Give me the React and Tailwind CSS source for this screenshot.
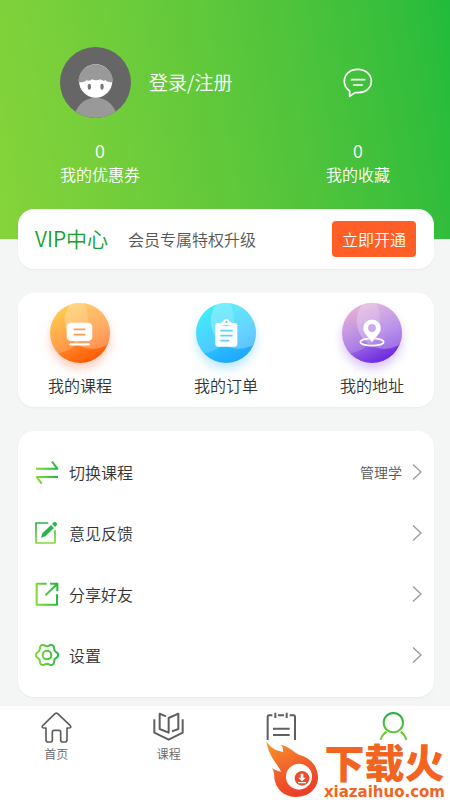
const shortcuts = [
  { label: "我的课程", Icon: CourseBall, glow: "shadow-[0_6px_10px_#ff6a3c50]" },
  { label: "我的订单", Icon: OrderBall, glow: "shadow-[0_6px_10px_#35b8ff50]" },
  { label: "我的地址", Icon: AddressBall, glow: "shadow-[0_6px_10px_#8a4cf050]" },
];

const menu = [
  { label: "切换课程", value: "管理学", Icon: SwapIcon },
  { label: "意见反馈", Icon: FeedbackIcon },
  { label: "分享好友", Icon: ShareIcon },
  { label: "设置", Icon: GearIcon },
];

const tabs = [
  { name: "首页", Icon: HomeIcon, showLabel: true },
  { name: "课程", Icon: BookIcon, showLabel: true },
  { name: "题库", Icon: CalendarIcon },
  { name: "我的", Icon: UserIcon },
];

function Avatar() {
  return (
    <svg viewBox="0 0 213 213" className="size-[71px]" aria-hidden="true">
      <defs>
        <clipPath id="avatar-clip">
          <circle cx="106.5" cy="106.5" r="106.5" />
        </clipPath>
      </defs>
      <g clipPath="url(#avatar-clip)">
        <rect width="213" height="213" fill="#666" />
        <circle cx="107" cy="216" r="64" fill="#999" />
        <circle cx="107" cy="102" r="50" fill="#fff" />
        <path d="M55 105a52 53 0 0 1 104 0q-14 3-23-5q-10 3-14-3q-14 6-26 0q-5 6-16 3q-8 8-25 5z" fill="#999" />
        <ellipse cx="88" cy="119" rx="5" ry="9" fill="#777" />
        <ellipse cx="126" cy="119" rx="5" ry="9" fill="#777" />
      </g>
    </svg>
  );
}

function ChatIcon() {
  return (
    <svg viewBox="0 0 90 90" className="size-[30px]" fill="none" stroke="#fff" strokeWidth="5" strokeLinecap="round" strokeLinejoin="round" aria-hidden="true">
      <path d="M20 85V69C9 62 4 52 4 40C4 18 21 4 44 4S85 19 85 40S67 74 46 74H36z" />
      <path d="M25 35H65M32 51H58" />
    </svg>
  );
}

function Ball({ id, from, mid, to, children }) {
  return (
    <svg viewBox="0 0 180 180" className="size-[60px]" aria-hidden="true">
      <defs>
        <linearGradient id={id} x1="0.2" y1="0.1" x2="0.65" y2="1">
          <stop offset="0" stopColor={from} />
          <stop offset="0.55" stopColor={mid} />
          <stop offset="1" stopColor={to} />
        </linearGradient>
        <clipPath id={`${id}-clip`}>
          <circle cx="90" cy="90" r="90" />
        </clipPath>
      </defs>
      <g clipPath={`url(#${id}-clip)`}>
        <rect width="180" height="180" fill={`url(#${id})`} />
        <circle cx="128" cy="54" r="84" fill="#fff" opacity="0.28" />
        <circle cx="10" cy="48" r="104" fill="#fff" opacity="0.16" />
      </g>
      {children}
    </svg>
  );
}

function CourseBall() {
  return (
    <Ball id="ball-course" from="#ffc02e" mid="#ff8a2a" to="#ff5a00">
      <rect x="50" y="59" width="77" height="55" rx="13" fill="#fff" />
      <path d="M73 79h31M73 95h31" stroke="#ff9b55" strokeWidth="5" strokeLinecap="round" />
      <path d="M62 124h54" stroke="#fff" strokeWidth="7" strokeLinecap="round" />
    </Ball>
  );
}

function OrderBall() {
  return (
    <Ball id="ball-order" from="#1de8fa" mid="#2cc4ff" to="#1fa4ff">
      <path d="M65 60h11q0 10 15 10t15-10h11q7 0 7 7v57q0 7-7 7H65q-7 0-7-7V67q0-7 7-7z" fill="#fff" />
      <path d="M74 62q0-5 7-6q2-8 10-8t10 8q7 1 7 6q0 4-5 4H79q-5 0-5-4z" fill="#fff" />
      <circle cx="91" cy="57" r="3" fill="#4fc9fd" />
      <path d="M75 83h33M75 98h33M75 113h23" stroke="#65cffb" strokeWidth="5" strokeLinecap="round" />
    </Ball>
  );
}

function AddressBall() {
  return (
    <Ball id="ball-address" from="#dca0cf" mid="#a06be2" to="#6a25e0">
      <ellipse cx="90" cy="117" rx="35" ry="11" fill="none" stroke="#fff" strokeWidth="5" />
      <path
        d="M90 49C74 49 63 61 63 76C63 92 79 102 86 114Q90 121 94 114C101 102 117 92 117 76C117 61 106 49 90 49zM90 64a11 11 0 1 1 0 22a11 11 0 1 1 0-22z"
        fill="#fff"
        stroke="#a981e6"
        strokeWidth="1"
        fillRule="evenodd"
      />
    </Ball>
  );
}

function LineIcon({ id, flip, children }) {
  return (
    <svg viewBox="0 0 72 72" className="size-6 shrink-0" fill="none" stroke={`url(#${id})`} strokeWidth="6" strokeLinejoin="round" aria-hidden="true">
      <defs>
        <linearGradient id={id} gradientUnits="userSpaceOnUse" x1={flip ? 30 : 4} y1={flip ? 4 : 40} x2={flip ? 36 : 68} y2={flip ? 70 : 34}>
          <stop offset="0" stopColor={flip ? "#27b24a" : "#84d83a"} />
          <stop offset="1" stopColor={flip ? "#8bdc38" : "#20b93f"} />
        </linearGradient>
      </defs>
      {children}
    </svg>
  );
}

function SwapIcon() {
  return (
    <LineIcon id="line-swap">
      <path d="M3 26H67L51 5M69 51H5L20 71" />
    </LineIcon>
  );
}

function FeedbackIcon() {
  return (
    <LineIcon id="line-feedback" flip>
      <path d="M40 6H3V66H60V28" strokeWidth="5" />
      <path d="M18 50L22 37L48 12L57 21L31 46z" fill="#2fb34b" stroke="none" />
      <path d="M51 9L55 5Q59 0 64 5Q69 10 64 14L60 18z" fill="#2fb34b" stroke="none" />
    </LineIcon>
  );
}

function ShareIcon() {
  return (
    <LineIcon id="line-share">
      <path d="M35 5H5V68H66V37M31 40L66 7M45 5H67V28" />
    </LineIcon>
  );
}

// six soft lobes around the hub
const gearPoints = Array.from({ length: 72 }, (_, i) => {
  const a = (i * Math.PI) / 36;
  const r = 30 + 3.5 * Math.cos(6 * a);
  return `${(36 + r * Math.cos(a)).toFixed(1)},${(36 + r * Math.sin(a)).toFixed(1)}`;
}).join(" ");

function GearIcon() {
  return (
    <LineIcon id="line-gear">
      <polygon points={gearPoints} />
      <circle cx="36" cy="36" r="13" />
    </LineIcon>
  );
}

function HomeIcon() {
  return (
    <svg viewBox="0 0 93 93" className="size-[31px]" fill="none" stroke="#5f5f5f" strokeWidth="5" strokeLinejoin="round" aria-hidden="true">
      <path d="M42 5Q46 2 50 5L88 41Q92 47 85 48H78V84Q78 90 72 90H65Q59 90 59 84V60Q59 55 54 55H39Q34 55 34 60V84Q34 90 28 90H21Q15 90 15 84V48H8Q1 47 5 41z" />
    </svg>
  );
}

function BookIcon() {
  return (
    <svg viewBox="0 0 93 93" className="size-[31px]" fill="none" stroke="#5f5f5f" strokeWidth="6" strokeLinejoin="round" aria-hidden="true">
      <path d="M4 22V62L47 83L89 62V22" />
      <path d="M39 13L20 5V51L47 62V18L76 5V51L57 58" />
    </svg>
  );
}

function CalendarIcon() {
  return (
    <svg viewBox="0 0 93 84" className="h-7 w-[31px]" fill="none" stroke="#5f5f5f" strokeWidth="6" aria-hidden="true">
      <path d="M5 84V14Q5 10 9 10H19M36 10H54M71 10H83Q87 10 87 14V84" />
      <path d="M28 2V18M62 2V18M21 50H71M21 69H71" />
    </svg>
  );
}

function UserIcon() {
  return (
    <svg viewBox="0 0 93 84" className="h-7 w-[31px]" fill="none" stroke="url(#tab-user)" strokeWidth="6" aria-hidden="true">
      <defs>
        <linearGradient id="tab-user" gradientUnits="userSpaceOnUse" x1="50" y1="0" x2="46" y2="84">
          <stop offset="0" stopColor="#22ad3f" />
          <stop offset="1" stopColor="#7ed037" />
        </linearGradient>
      </defs>
      <circle cx="46" cy="32" r="29" />
      <path d="M8 84Q12 68 26 59M68 59Q81 68 85 84" />
    </svg>
  );
}

function FlameLogo() {
  return (
    <svg viewBox="120 150 165 174" className="h-[58px] w-[55px] shrink-0" aria-hidden="true">
      <defs>
        <linearGradient id="flame" x1="0.1" y1="0" x2="0.5" y2="1">
          <stop offset="0" stopColor="#f7952a" />
          <stop offset="0.5" stopColor="#f3642a" />
          <stop offset="1" stopColor="#ec3f27" />
        </linearGradient>
      </defs>
      <path
        d="M124 154C136 174 152 182 174 186C175 178 173 170 168 164C188 168 204 184 222 194C256 203 279 228 279 262C279 297 250 321 214 321C178 321 151 297 148 264C148 251 146 242 141 234C150 241 159 244 168 245C158 222 131 200 124 154z"
        fill="url(#flame)"
      />
      <circle cx="222" cy="260" r="39" fill="#fff" />
      <circle cx="231" cy="265" r="22" fill="#ee4b28" />
      <path d="M227 251h8v12h7l-11 11l-11-11h7zM219 276h24v4h-24z" fill="#fff" />
    </svg>
  );
}

function Chevron() {
  return (
    <svg viewBox="0 0 10 18" className="h-[18px] w-[10px] shrink-0" fill="none" stroke="#999" strokeWidth="1.3" aria-hidden="true">
      <path d="M1 1.500L9 9L1 16.500" />
    </svg>
  );
}

const Stat = ({ count, label }) => (
  <a href="#" className="flex flex-col items-center">
    <span className="text-lg leading-6">{count}</span>
    <span className="text-base leading-6">{label}</span>
  </a>
);

export default function App() {
  return (
    <div className="flex min-h-screen flex-col bg-white font-['Noto_Sans_CJK_SC',sans-serif] text-base font-[350] text-[#333]">
      <header className="bg-linear-80 from-[#86d43a] to-[#21bb3b] px-[60px] pt-[47px] pb-[53px] text-white">
        <div className="flex items-center justify-between">
          <a href="#" className="flex items-center gap-[18px] text-[19px]">
            <Avatar />
            登录/注册
          </a>
          <button type="button" aria-label="消息" className="flex w-16 justify-center">
            <ChatIcon />
          </button>
        </div>
        <div className="mt-5 flex justify-between">
          <Stat count={0} label="我的优惠券" />
          <Stat count={0} label="我的收藏" />
        </div>
      </header>

      <main className="bg-[#f4f6f5] pr-4 pb-[9px] pl-[18px]">
        <div className="-mt-[30px] flex flex-col gap-6">
          <section className="flex h-[60px] items-center rounded-2xl bg-white pr-[18px] pl-[17px] shadow-xs">
            <h2 className="text-[21px] text-[#14a02c]">VIP中心</h2>
            <p className="ml-5 flex-1 text-[#555]">会员专属特权升级</p>
            <button type="button" className="h-9 rounded bg-[#ff5f27] px-[10px] text-white">
              立即开通
            </button>
          </section>

          <section className="flex justify-between rounded-2xl bg-white px-[30px] py-[10px] shadow-xs">
            {shortcuts.map(({ label, Icon, glow }) => (
              <a href="#" key={label} className="flex flex-col items-center gap-[10px]">
                <span className={`rounded-full ${glow}`}>
                  <Icon />
                </span>
                <span className="leading-6">{label}</span>
              </a>
            ))}
          </section>

          <ul className="rounded-2xl bg-white pt-[10px] pr-3 pb-3 pl-[17px] shadow-xs">
            {menu.map(({ label, value, Icon }) => (
              <li key={label}>
                <a href="#" className="flex h-[61px] items-center gap-[10px]">
                  <Icon />
                  <span className="flex-1">{label}</span>
                  {value && <span className="text-sm text-[#555]">{value}</span>}
                  <Chevron />
                </a>
              </li>
            ))}
          </ul>
        </div>
      </main>

      <nav className="relative grid min-h-[94px] flex-1 grid-cols-4 bg-white pt-[6px]">
        {tabs.map(({ name, Icon, showLabel }) => (
          <a href="#" key={name} aria-label={name} className="flex flex-col items-center gap-px text-xs text-[#666]">
            <Icon />
            {showLabel && <span className="leading-5">{name}</span>}
          </a>
        ))}
        <div className="absolute top-[34px] right-[5px] flex gap-1 text-[#f2641f]">
          <FlameLogo />
          <div className="flex flex-col items-center gap-1">
            <span className="text-[40px] leading-[42px] font-black">下载火</span>
            <span className="font-['DejaVu_Sans',sans-serif] text-[15px] leading-3 font-bold">xiazaihuo.com</span>
          </div>
        </div>
      </nav>
    </div>
  );
}
